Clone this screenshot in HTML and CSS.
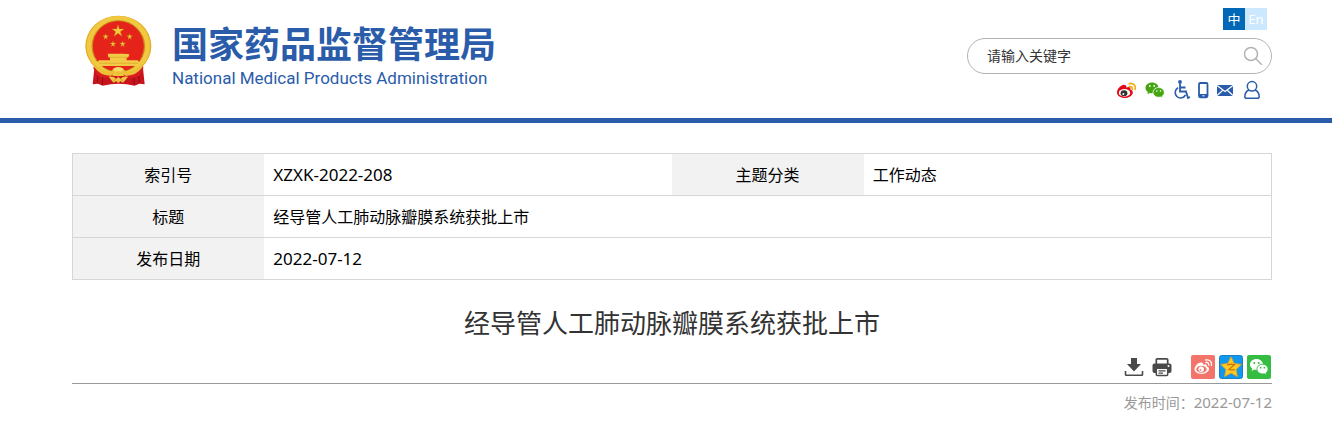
FILE: index.html
```html
<!DOCTYPE html>
<html lang="zh-CN">
<head>
<meta charset="utf-8">
<title>经导管人工肺动脉瓣膜系统获批上市</title>
<link rel="stylesheet" href="styles.css">
</head>
<body>
<header class="site-header">
  <div class="wrap header-inner">
    <a class="brand" href="#">
      <svg class="emblem" viewBox="36 21 204 216" aria-hidden="true">
        <path d="M68 172 62 229l16-2 14 6 24-4 24-2 24 2 24 4 14-6 16 2-6-57z" fill="#c8141c"/>
        <path d="M79 184l-3 40M93 196l-2 34M199 184l3 40M185 196l2 34" stroke="#8e0c14" stroke-width="3"/>
        <ellipse cx="139" cy="114" rx="99" ry="91" fill="#e2aa22"/>
        <ellipse cx="139" cy="114" rx="88" ry="83" fill="none" stroke="#f1c941" stroke-width="14"/>
        <ellipse cx="139" cy="115" rx="78" ry="77" fill="#e5231b" stroke="#c98d1c" stroke-width="3"/>
        <g fill="#f4cb3c" stroke="#b8860f" stroke-width="1">
          <path d="m138 50 4 13h14l-11 8 5 14-12-9-12 9 5-14-11-8h14z"/>
          <path id="s" d="m101 77 2 6h7l-6 4 2 7-5-4-5 4 2-7-6-4h7z"/>
          <use href="#s" x="72"/><use href="#s" x="22" y="22"/><use href="#s" x="51" y="22"/>
        </g>
        <path d="M107 137h45q20 0 20 3l-3 8h-5v9h33l7 8v9H74v-9l7-8h33v-9h-5z" fill="#f2ca45"/>
        <path d="M110 148h58M80 166h118" stroke="#d9a42c" stroke-width="2"/>
        <path d="M63 178q4-2 10 4 22 26 52 14l-6 10q-30 8-46-6zM215 178q-4-2-10 4-22 26-52 14l6 10q30 8 46-6z" fill="#d81c20"/>
        <path d="M70 168q20 26 48 22l9-10q12-6 24 0l9 10q28 4 48-22l3 10q-20 27-50 25l-12-8-10 8-10-8-12 8q-30 2-50-25z" fill="#edbf37"/>
        <path d="M122 183q17-10 34 0l-9 8q-8-4-16 0z" fill="#f8dc6a"/>
        <path d="M110 206q16-2 22 6l7-5 7 5q6-8 22-6l-13 17q-4 2-9-4l-7 6-7-6q-5 6-9 4z" fill="#efc445"/>
        <path d="m132 212-8 9M146 212l8 9" stroke="#bf8419" stroke-width="2"/>
      </svg>
      <span class="brand-text">
        <span class="brand-cn">国家药品监督管理局</span>
        <span class="brand-en">National Medical Products Administration</span>
      </span>
    </a>
    <div class="tools">
      <nav class="lang"><a class="lang-item lang-on" href="#">中</a><a class="lang-item" href="#">En</a></nav>
      <form class="search">
        <input class="search-input" type="text" placeholder="请输入关键字" aria-label="请输入关键字">
        <button class="search-btn" type="button" aria-label="搜索">
          <svg width="20" height="20" viewBox="0 0 20 20" fill="none" stroke="#b3b3b3" stroke-width="1.5"><circle cx="8" cy="8" r="6.5"/><path d="m12.8 12.8 6 6"/></svg>
        </button>
      </form>
      <nav class="quick">
        <a href="#" aria-label="微博"><svg width="21" height="20" viewBox="0 0 21 20"><path d="M8.600 4.900c-2.600-.8-7.600 3.600-7.600 7.500 0 3.200 3.500 5.500 7.700 5.500 4.600 0 8.100-2.700 8.100-5.500 0-1.600-1.300-2.500-2.500-2.800.9-2.600-1-3.200-4-2 .4-1.300 0-2.400-1.700-2.700z" fill="#e00b16"/><ellipse cx="8.500" cy="12.900" rx="5.700" ry="3.800" fill="#fff"/><ellipse cx="8" cy="13.200" rx="3.400" ry="3" fill="#333"/><circle cx="7.300" cy="13.900" r="1" fill="#fff"/><path d="M13.200 3.800c4-1.400 7 2 6 5.500M13.500 6.600c2-.5 3.200.8 2.800 2.700" fill="none" stroke="#f2a90c" stroke-width="1.700" stroke-linecap="round"/></svg></a>
        <a href="#" aria-label="微信"><svg width="20" height="20" viewBox="0 0 20 20"><path d="M7 2.500C3.300 2.500.5 4.800.5 7.900c0 1.700 1 3.200 2.400 4.200l-.6 2.100 2.400-1.200c.8.200 1.600.3 2.300.3 3.700 0 6.500-2.400 6.500-5.400S10.700 2.500 7 2.500z" fill="#45a611"/><path d="M13.700 7.500c-3.200 0-5.700 2.200-5.700 4.900s2.500 4.900 5.700 4.900c.7 0 1.300-.1 1.900-.3l2 1-.5-1.800c1.400-.9 2.200-2.200 2.200-3.800 0-2.700-2.400-4.900-5.600-4.900z" fill="#45a611" stroke="#fff" stroke-width=".8"/><g fill="#fff"><circle cx="4.800" cy="6" r=".9"/><circle cx="9.200" cy="6" r=".9"/><circle cx="11.800" cy="11" r=".8"/><circle cx="15.500" cy="11" r=".8"/></g></svg></a>
        <a href="#" aria-label="无障碍"><svg width="17" height="20" viewBox="0 0 17 20" fill="none" stroke="#2a5caa" stroke-width="1.800"><circle cx="7" cy="2" r="1.900" fill="#2a5caa" stroke="none"/><path d="M7 4v7.500h6l2 6.500 2-1M7 7.500h5.500"/><path d="M5 7.800a5.400 5.400 0 1 0 7.500 7" stroke-width="1.600"/></svg></a>
        <a href="#" aria-label="手机版"><svg width="11" height="20" viewBox="0 0 11 20"><rect x="1" y="3" width="8.500" height="14.300" rx="1.200" fill="none" stroke="#2a5caa" stroke-width="1.800"/><path d="M1 14h9v3H1z" fill="#2a5caa"/><path d="M4.500 15.800h2" stroke="#fff"/></svg></a>
        <a href="#" aria-label="邮箱"><svg width="17" height="20" viewBox="0 0 17 20"><path d="M0 5h16v11H0z" fill="#2a5caa"/><path d="m0 5.500 8 6 8-6M0 15.500l5.500-5M16 15.500l-5.500-5" fill="none" stroke="#fff" stroke-width="1.200"/></svg></a>
        <a href="#" aria-label="个人中心"><svg width="20" height="20" viewBox="0 0 20 20" fill="none" stroke="#2a5caa" stroke-width="1.500"><circle cx="10" cy="6.300" r="4.700"/><path d="M6.800 10c-2.500 1.300-4 3.700-4 6.500 0 1.200.7 1.800 1.800 1.800h10.800c1.100 0 1.800-.6 1.800-1.800 0-2.800-1.500-5.200-4-6.500"/></svg></a>
      </nav>
    </div>
  </div>
</header>
<main class="wrap">
  <table class="meta">
    <tr><th scope="row">索引号</th><td class="num">XZXK-2022-208</td><th scope="row">主题分类</th><td>工作动态</td></tr>
    <tr><th scope="row">标题</th><td colspan="3">经导管人工肺动脉瓣膜系统获批上市</td></tr>
    <tr><th scope="row">发布日期</th><td class="num" colspan="3">2022-07-12</td></tr>
  </table>
  <h1 class="title">经导管人工肺动脉瓣膜系统获批上市</h1>
  <div class="actions">
    <button type="button" class="act" aria-label="下载"><svg width="20" height="20" viewBox="0 0 20 20"><path d="M7 1h6v6h4l-7 7.500L3 7h4z" fill="#4a4a4a"/><path d="M1.500 14v3.500q0 .8.800.8h15.400q.8 0 .8-.8V14" fill="none" stroke="#4a4a4a" stroke-width="1.600"/></svg></button>
    <button type="button" class="act act-print" aria-label="打印"><svg width="20" height="20" viewBox="0 0 20 20"><path d="M4.300 7V2.800q0-1 1-1h9.400q1 0 1 1V7" fill="none" stroke="#4a4a4a" stroke-width="1.700"/><rect x=".5" y="6.500" width="19" height="9.500" rx="2" fill="#4a4a4a"/><rect x="4.300" y="11.300" width="11.400" height="7.200" rx="1" fill="#fff" stroke="#4a4a4a" stroke-width="1.500"/><path d="M6.500 13.800h7M6.500 16.200h4.500" stroke="#4a4a4a" stroke-width="1.200"/><circle cx="16.500" cy="9" r="1" fill="#fff"/></svg></button>
    <a class="share" href="#" aria-label="分享到微博"><svg width="24" height="24" viewBox="0 0 24 24"><rect width="24" height="24" rx="2" fill="#f47469"/><path d="M10.300 7.600C8 6.800 3.500 10.800 3.500 14.300c0 2.800 3.200 4.600 7 4.600 4.300 0 7.500-2.300 7.500-4.800 0-1.500-1.200-2.300-2.300-2.600.8-2.300-.9-2.900-3.700-1.800.4-1.200 0-1.900-1.700-2.100z" fill="#fff"/><ellipse cx="10.500" cy="14.200" rx="5.200" ry="3.500" fill="#f47469"/><circle cx="10.200" cy="14.300" r="2.700" fill="#fff"/><circle cx="9.400" cy="14.900" r=".9" fill="#f47469"/><path d="M14.700 5c4-1 6.700 2.100 5.700 5.500M15 7.500c2-.5 3.100.8 2.700 2.500" fill="none" stroke="#fff" stroke-width="1.300" stroke-linecap="round"/></svg></a>
    <a class="share" href="#" aria-label="分享到QQ空间"><svg width="24" height="24" viewBox="0 0 24 24"><rect x=".5" y=".5" width="23" height="23" rx="2" fill="#1098ee" stroke="#1681c5"/><path d="m12 1.800 3.100 6.600 7.200 1-5.300 5 1.400 7.200-6.400-3.600-6.400 3.600L7 14.400l-5.300-5 7.200-1z" fill="#ffca28" stroke="#f4a010" stroke-width=".8"/><path d="M8 9.800q4-1 7.500-.2l-5.500 5q3.500.7 6 0" fill="none" stroke="#c97900" stroke-width="1.300"/></svg></a>
    <a class="share" href="#" aria-label="分享到微信"><svg width="24" height="24" viewBox="0 0 24 24"><rect width="24" height="24" rx="2" fill="#35bd43"/><path d="M9.500 4C5.800 4 3 6.400 3 9.500c0 1.700.9 3.200 2.300 4.200l-.6 2.200 2.500-1.300c.8.200 1.500.3 2.300.3 3.700 0 6.500-2.400 6.500-5.400S13.200 4 9.500 4z" fill="#fff"/><path d="M15.500 9.200c-3.200 0-5.600 2.200-5.600 4.900s2.400 4.900 5.600 4.900c.7 0 1.300-.1 1.900-.3l2.200 1.200-.6-2c1.300-.9 2.100-2.200 2.100-3.800 0-2.700-2.400-4.900-5.600-4.900z" fill="#fff" stroke="#35bd43" stroke-width=".9"/><g fill="#35bd43"><circle cx="7.300" cy="7.900" r="1"/><circle cx="11.700" cy="7.900" r="1"/><circle cx="13.600" cy="12.700" r=".9"/><circle cx="17.400" cy="12.700" r=".9"/></g></svg></a>
  </div>
  <p class="date">发布时间：<time>2022-07-12</time></p>
</main>
</body>
</html>
```

FILE: styles.css
```css
* { box-sizing: border-box; }
body {
  margin: 0;
  background: #fff;
  color: #000;
  font: 16px/24px "Noto Sans", "Noto Sans CJK SC", sans-serif;
}
a { color: inherit; text-decoration: none; }
svg { display: block; }
button { padding: 0; border: 0; background: none; cursor: pointer; }
.wrap { padding: 0 60px 0 72px; }
.site-header { border-bottom: 5px solid #2a5caa; }
.header-inner {
  display: flex;
  justify-content: space-between;
  align-items: flex-start;
  min-height: 118px;
  padding-top: 8px;
}
.brand { display: flex; gap: 20px; padding: 7px 0 0 12px; color: #2a5caa; }
.emblem { width: 68px; height: 72px; }
.brand-text { display: flex; flex-direction: column; white-space: nowrap; }
.brand-cn { font: 700 36px/50px "Noto Sans CJK SC", sans-serif; padding-top: 2px; }
.brand-en { font: 17px/22px Roboto, sans-serif; }
.tools { display: flex; flex-direction: column; align-items: flex-end; width: 305px; }
.lang { display: flex; padding-right: 5px; }
.lang-item {
  width: 22px;
  height: 22px;
  background: #cce8ff;
  color: #fff;
  font-size: 13px;
  line-height: 22px;
  text-align: center;
}
.lang-on { background: #0068b7; }
.search {
  display: flex;
  align-items: center;
  width: 100%;
  height: 36px;
  margin-top: 8px;
  padding: 0 8px 0 19px;
  border: 1px solid #b3b3b3;
  border-radius: 18px;
}
.search-input {
  flex: 1;
  min-width: 0;
  padding: 0;
  border: 0;
  outline: 0;
  background: none;
  font: 14px/20px "Noto Sans", "Noto Sans CJK SC", sans-serif;
}
.search-input::placeholder { color: #333; opacity: 1; }
.quick { display: flex; gap: 8px; margin-top: 6px; padding-right: 10px; }
.meta {
  width: 100%;
  margin-top: 30px;
  border: 1px solid #d6d6d6;
  border-collapse: collapse;
  table-layout: fixed;
}
.meta tr { border-bottom: 1px solid #d6d6d6; }
.meta th, .meta td { height: 42px; padding: 8px 10px 8px 9px; line-height: 24px; }
.meta th { width: 16%; background: #f2f2f2; font-weight: 400; text-align: center; }
.meta .num { font-size: 17px; }
.title {
  margin: 23px 0 12px;
  color: #333;
  font-size: 26px;
  font-weight: 400;
  line-height: 40px;
  text-align: center;
}
.actions {
  display: flex;
  justify-content: flex-end;
  align-items: center;
  gap: 4px;
  padding: 0 1px 4px 0;
  border-bottom: 1px solid #999;
}
.act { margin-right: 4px; }
.act-print { margin-right: 15px; }
.date { margin: 6px 0 0; color: #999; font-size: 14px; text-align: right; }
.date time { font-size: 15px; }
```
